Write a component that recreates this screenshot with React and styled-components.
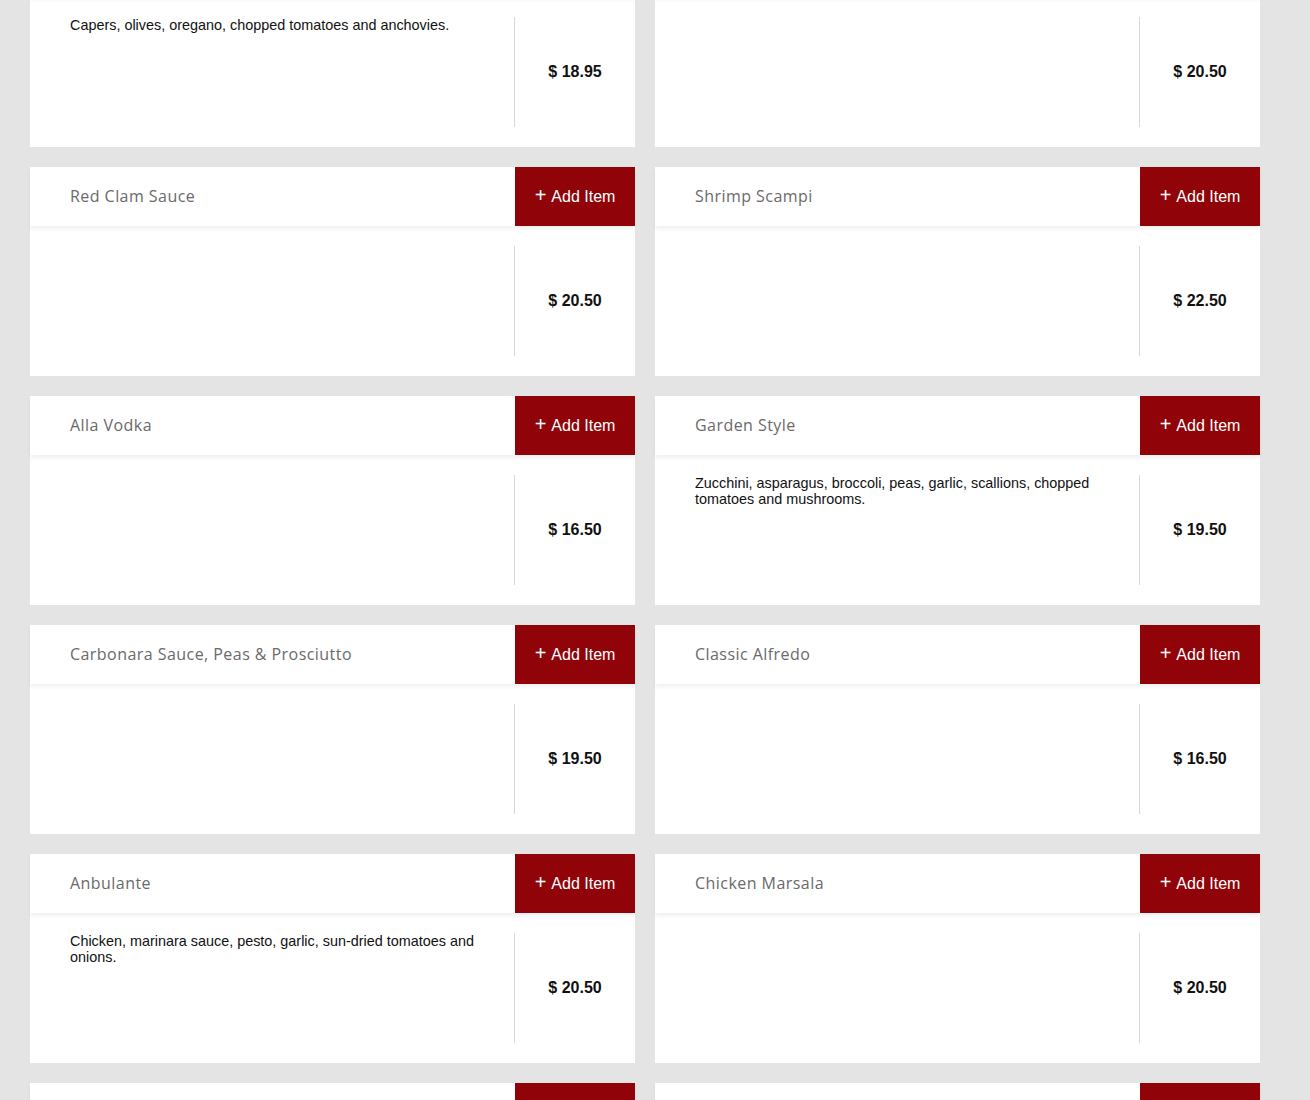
import React from "react";
import styled, { createGlobalStyle } from "styled-components";

const GlobalStyle = createGlobalStyle`
    html, body {
        margin: 0;
        padding: 0;
        background: #e4e4e4;
        font-family: "Liberation Sans", Arial, sans-serif;
    }
`;

const Page = styled.div`
    width: 1230px;
    padding: 0 30px;
    margin-top: -62px;
    display: grid;
    grid-template-columns: repeat(2, 605px);
    column-gap: 20px;
    row-gap: 20px;
`;

const Card = styled.div`
    background: #fff;
    display: flex;
    flex-direction: column;
`;

const Header = styled.div`
    display: flex;
    height: 59px;
    position: relative;
    z-index: 1;
    box-shadow: 0 3px 4px rgba(0, 0, 0, 0.06);
`;

const Title = styled.div`
    flex: 1;
    display: flex;
    align-items: center;
    padding-left: 40px;
    padding-bottom: 1px;
    font-family: "Open Sans", "Noto Sans", sans-serif;
    font-size: 16px;
    letter-spacing: 0.45px;
    color: #6a6a6a;
`;

const AddButton = styled.button`
    width: 120px;
    border: none;
    background: #8f0309;
    color: #fff;
    font-family: "Liberation Sans", Arial, sans-serif;
    font-size: 16px;
    display: flex;
    align-items: center;
    justify-content: center;
    gap: 5px;
    padding: 0;
    cursor: pointer;
`;

const Plus = styled.span`
    font-size: 20px;
    line-height: 1;
    position: relative;
    top: -2px;
`;

const Body = styled.div`
    display: flex;
    height: 150px;
    padding: 20px 0;
    box-sizing: border-box;
`;

const Description = styled.p`
    flex: 1;
    margin: 0;
    padding: 0 40px;
    font-size: 14.4px;
    line-height: 16px;
    color: #111;
`;

const PriceCell = styled.div`
    width: 120px;
    border-left: 1px solid #d8d8d8;
    display: flex;
    align-items: center;
    justify-content: center;
    font-weight: bold;
    font-size: 16px;
    color: #111;
`;

const items = [
    { name: "Puttanesca", desc: "Capers, olives, oregano, chopped tomatoes and anchovies.", price: "18.95" },
    { name: "White Clam Sauce", desc: "", price: "20.50" },
    { name: "Red Clam Sauce", desc: "", price: "20.50" },
    { name: "Shrimp Scampi", desc: "", price: "22.50" },
    { name: "Alla Vodka", desc: "", price: "16.50" },
    { name: "Garden Style", desc: "Zucchini, asparagus, broccoli, peas, garlic, scallions, chopped tomatoes and mushrooms.", price: "19.50" },
    { name: "Carbonara Sauce, Peas & Prosciutto", desc: "", price: "19.50" },
    { name: "Classic Alfredo", desc: "", price: "16.50" },
    { name: "Anbulante", desc: "Chicken, marinara sauce, pesto, garlic, sun-dried tomatoes and onions.", price: "20.50" },
    { name: "Chicken Marsala", desc: "", price: "20.50" },
    { name: "Chicken Francese", desc: "", price: "20.50" },
    { name: "Shrimp Fra Diavolo", desc: "", price: "22.50" },
];

export default function App() {
    return (
        <>
            <GlobalStyle />
            <Page>
                {items.map(item => (
                    <Card key={item.name}>
                        <Header>
                            <Title>{item.name}</Title>
                            <AddButton>
                                <Plus>+</Plus>
                                <span>Add Item</span>
                            </AddButton>
                        </Header>
                        <Body>
                            <Description>{item.desc}</Description>
                            <PriceCell>$ {item.price}</PriceCell>
                        </Body>
                    </Card>
                ))}
            </Page>
        </>
    );
}
